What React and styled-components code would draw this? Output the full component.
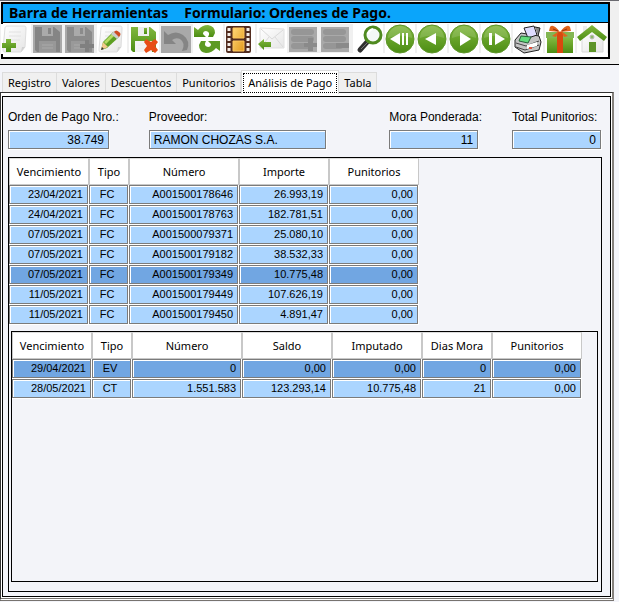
import React, { useState } from 'react'
import styled, { createGlobalStyle } from 'styled-components'

const GlobalStyle = createGlobalStyle`
  * {
    box-sizing: border-box;
  }
  body {
    margin: 0;
    background: #f3f4f9;
    color: #000;
    font-family: 'Noto Sans', 'Open Sans', sans-serif;
    font-size: 11px;
  }
`

const Page = styled.div`
  display: flex;
  flex-direction: column;
  min-height: 100vh;
  padding-bottom: 1px;
`

const Header = styled.header`
  background: #f0f0f0;
  border-top: 1px solid #6a6a70;
  border-bottom: 1px solid #000;
  padding: 1px 9px 5px 1px;
`

const Toolbar = styled.div`
  border: 2px solid #000;
  background: #fff;
`

const TitleBar = styled.h1`
  display: flex;
  gap: 16px;
  height: 19px;
  margin: 0;
  padding-left: 6px;
  background: #0aa5fb;
  border-bottom: 1px solid #000;
  font-size: 14px;
  font-weight: 700;
  line-height: 17px;
  white-space: nowrap;
`

const ToolRow = styled.div`
  display: flex;
  gap: 2px;
  margin-left: -2px;
  padding: 1px 0 3px;
  background: linear-gradient(#f0f0f0, #f0f0f0) no-repeat 0 1px / 100% 29px;
`

const ToolButton = styled.button`
  flex: none;
  width: 30px;
  height: 30px;
  padding: 0;
  border: 0;
  background: ${(props) => (props.disabled ? 'transparent' : '#fff')};

  svg {
    display: block;
  }
`

const Tabs = styled.div`
  display: flex;
  align-items: flex-end;
  height: 27px;
  padding-left: 2px;
`

const Tab = styled.button`
  position: relative;
  z-index: ${(props) => (props.$active ? 1 : 0)};
  height: ${(props) => (props.$active ? '24px' : '20px')};
  margin-bottom: ${(props) => (props.$active ? '-2px' : '0')};
  padding: ${(props) => (props.$active ? '1px' : '1px 5px 0')};
  border: 1px solid #dcdcdc;
  border-bottom: 0;
  border-left-width: ${(props) => (props.$active ? '1px' : '0')};
  background: ${(props) => (props.$active ? '#fff' : '#f0f0f0')};
  font: inherit;
  color: #000;
  line-height: 18px;
  white-space: nowrap;

  &:first-child {
    border-left-width: 1px;
  }

  span {
    display: block;
    padding: ${(props) => (props.$active ? '0 4px' : '0')};
    border: ${(props) => (props.$active ? '1px dotted #000' : '0')};
  }
`

const Panel = styled.main`
  flex: 1;
  display: flex;
  margin-right: 5px;
  padding: 3px 1px 1px;
  border: 1px solid #333;
  border-right: 2px solid #85817d;
  border-bottom: 3px double #77736f;
  background: #fff;
`

const Form = styled.div`
  flex: 1;
  display: flex;
  flex-direction: column;
  min-width: 0;
  padding: 12px 8px 4px 5px;
  border: 1px solid #000;
  background: #f3f4f9;
`

const Fields = styled.div`
  display: flex;
  gap: 30px;
  margin-bottom: 8px;
  padding-right: 1px;
`

const Field = styled.label`
  display: flex;
  flex-direction: column;
  gap: 4px;
  margin-left: ${(props) => (props.$push ? 'auto' : '0')};
  font: 12px/17px 'Liberation Sans', Arial, sans-serif;
  white-space: nowrap;
`

const Input = styled.input`
  width: ${(props) => props.$width}px;
  height: 19px;
  padding: 0 4px;
  border: 1px solid #7b7b7b;
  border-radius: 0;
  outline: none;
  background: #abd5ff;
  box-shadow: inset 1px 1px 0 #fff, 1px 1px 0 #fff;
  font: inherit;
  text-align: ${(props) => props.$align || 'right'};
`

const Frame = styled.section`
  flex: 1;
  display: flex;
  flex-direction: column;
  border: 1px solid #000;
`

const InnerFrame = styled(Frame)`
  margin: 6px 3px 9px 2px;
`

const Table = styled.table`
  table-layout: fixed;
  width: ${(props) => props.$width}px;
  border-collapse: separate;
  border-spacing: 0;
`

const HeadCell = styled.th`
  width: ${(props) => props.$width}px;
  height: 27px;
  padding: 0;
  border: 1px solid #c8c8c8;
  border-top-color: #dcdcdc;
  background: #fff;
  font-weight: 400;
  white-space: nowrap;
`

const Cell = styled.td`
  height: 20px;
  padding: 0 5px 0 2px;
  border: solid #fff;
  border-width: 0 1px 1px 0;
  background: ${(props) => (props.$selected ? '#71a6e2' : '#abd5ff')};
  box-shadow: inset 0 0 0 1px #7b7b7b, inset 2px 2px 0 #fff;
  font: 11px/17px 'Liberation Sans', Arial, sans-serif;
  text-align: ${(props) => props.$align || 'right'};
`

const Svg = ({ children }) => (
  <svg width="30" height="30" viewBox="0 0 30 30" aria-hidden="true">
    <defs>
      <linearGradient id="green" x1="0" y1="0" x2="0" y2="1">
        <stop offset="0" stopColor="#82b83f" />
        <stop offset="1" stopColor="#4c8d13" />
      </linearGradient>
      <linearGradient id="gold" x1="0" y1="0" x2="1" y2="1">
        <stop offset="0" stopColor="#ffd777" />
        <stop offset="1" stopColor="#e39a1d" />
      </linearGradient>
      <linearGradient id="paper" x1="0" y1="0" x2="1" y2="1">
        <stop offset="0" stopColor="#fff" />
        <stop offset="1" stopColor="#e6e6e6" />
      </linearGradient>
    </defs>
    {children}
  </svg>
)

const Sheet = () => (
  <>
    <path d="M6 2h17c2 0 2 1 2 3l-1 18-4 5H4c-2 0-2-1-2-3L4 4c0-1 1-2 2-2z" fill="url(#paper)" stroke="#dedede" />
    <path d="M8 8h12M8 12h12M7 16h12M7 20h8" stroke="#e2e2e2" />
    <path d="M20 28l1-5h3z" fill="#d2d2d2" />
  </>
)

const GrayBox = () => <path d="M0 1h29v28H0z" fill="#a9a9a9" />

const Disk = ({ body, slot, paper }) => (
  <>
    <path d="M2 3h19l6 5v20H4l-2-2z" fill={body} />
    <path d="M9 3h11v9H9z" fill={slot} />
    <path d="M15 4h3v6h-3z" fill={body} />
    <path d="M6 17h17v11H6z" fill={paper} />
    <path d="M9 21h11M9 24h11" stroke={slot} />
  </>
)

const Bars = ({ minus }) => (
  <>
    <path d="M0 3h28v25H0z" fill="#a9a9a9" />
    <g fill="#969696">
      <rect x="2" y="5" width="23" height="6" rx="3" />
      <rect x="2" y="12" width="23" height="6" rx="3" />
      <rect x="2" y="19" width="20" height="6" rx="3" />
    </g>
    <path d={minus ? 'M15 19h13v5H15z' : 'M19 14h5v5h4v4h-4v4h-5v-4h-4v-4h4z'} fill="#8a8a8a" />
  </>
)

const Ball = ({ children }) => (
  <>
    <circle cx="15" cy="15" r="14" fill="url(#green)" stroke="#5e9629" />
    <path d="M3 14a12 12 0 0 1 24 0q-12-5-24 0z" fill="#fff" opacity=".14" />
    <g fill="#fff">{children}</g>
  </>
)

const tools = [
  {
    label: 'Nuevo',
    icon: (
      <>
        <Sheet />
        <path d="M5 15h5v4h5v5h-5v4H5v-4H1v-5h4z" fill="url(#green)" />
      </>
    ),
  },
  {
    label: 'Guardar',
    disabled: true,
    icon: (
      <>
        <GrayBox />
        <Disk body="#858585" slot="#aaa" paper="#989898" />
      </>
    ),
  },
  {
    label: 'Guardar y agregar',
    disabled: true,
    icon: (
      <>
        <GrayBox />
        <Disk body="#8b8b8b" slot="#aaa" paper="#999" />
        <path d="M20 16h4v4h5v4h-5v4h-4v-4h-5v-4h5z" fill="#808080" />
      </>
    ),
  },
  {
    label: 'Modificar',
    icon: (
      <>
        <Sheet />
        <path d="M4 26l2-8 10-10 6 5-12 11z" fill="#5d9f22" />
        <path d="M7 18L17 8l2 2L9 20z" fill="#b6dc66" />
        <path d="M4 26l2-8 5 5z" fill="#f4c98d" />
        <path d="M4 26l1-3 2 2z" fill="#333" />
        <path d="M14 10l3-3 6 5-3 3z" fill="#ccc" />
        <path d="M17 8q2-3 5 0 3 2 0 5z" fill="#cd4c22" />
      </>
    ),
  },
  {
    label: 'Eliminar',
    icon: (
      <>
        <Disk body="url(#green)" slot="#eee" paper="#f3f3f3" />
        <path d="M17 15l5 3 4-3 3 3-3 4 3 4-3 3-4-3-5 3-2-3 3-4-3-4z" fill="#e84c15" />
      </>
    ),
  },
  {
    label: 'Deshacer',
    disabled: true,
    icon: (
      <>
        <path d="M0 2h30v27H0z" fill="#a9a9a9" />
        <path d="M3 7l4 4q8-5 15 0 8 6 4 15l-5 1q4-8-2-12-4-2-8 1l4 4H3z" fill="#858585" />
      </>
    ),
  },
  {
    label: 'Actualizar',
    icon: (
      <>
        <path d="M1 3l4 3Q9 1 15 1q7 1 7 8l-2 4h-5q3-5-2-6-3 0-3 3l3 3H1z" fill="url(#green)" />
        <path
          d="M1 3l4 3Q9 1 15 1q7 1 7 8l-2 4h-5q3-5-2-6-3 0-3 3l3 3H1z"
          fill="#5c9a22"
          transform="rotate(180 14 15)"
        />
      </>
    ),
  },
  {
    label: 'Vista previa',
    icon: (
      <>
        <rect x="1" y="2" width="25" height="27" rx="2" fill="#522d20" />
        <path d="M4 4v24M23 4v24" stroke="#f5eee8" strokeWidth="3" strokeDasharray="3 2" />
        <path d="M8 4h11v10H8zM8 17h11v10H8z" fill="url(#gold)" stroke="#ffc65a" />
      </>
    ),
  },
  {
    label: 'Enviar',
    icon: (
      <>
        <path d="M3 4l24 1v19H3z" fill="url(#paper)" stroke="#e0e0e0" />
        <path d="M4 5l11 10L26 6M4 23l8-10M26 23l-8-10" fill="none" stroke="#dadada" />
        <path d="M1 20l6-5v3h7v5H7v3z" fill="url(#green)" />
      </>
    ),
  },
  { label: 'Agregar fila', disabled: true, icon: <Bars /> },
  { label: 'Quitar fila', disabled: true, icon: <Bars minus /> },
  {
    label: 'Buscar',
    icon: (
      <>
        <path d="M15 17l-8 9" stroke="#303030" strokeWidth="5" strokeLinecap="round" />
        <path d="M15 18l-7 7" stroke="#777" />
        <circle cx="20" cy="11" r="8" fill="#f4f8f6" stroke="#4f8a20" strokeWidth="3" />
        <path d="M15 10q1-4 5-5" fill="none" stroke="#fff" strokeWidth="2" />
      </>
    ),
  },
  {
    label: 'Primero',
    icon: (
      <Ball>
        <path d="M5 15l10-6v12zM17 9h2v12h-2zM21 9h2v12h-2z" />
      </Ball>
    ),
  },
  {
    label: 'Anterior',
    icon: (
      <Ball>
        <path d="M8 15l11-6v12z" />
      </Ball>
    ),
  },
  {
    label: 'Siguiente',
    icon: (
      <Ball>
        <path d="M22 15L11 8v14z" />
      </Ball>
    ),
  },
  {
    label: 'Último',
    icon: (
      <Ball>
        <path d="M24 15l-10-6v12zM8 9h3v12H8z" />
      </Ball>
    ),
  },
  {
    label: 'Imprimir',
    icon: (
      <>
        <path d="M2 16L8 9l18 3 2 6-2 8-15 3-9-6z" fill="#c4c4c4" stroke="#222" />
        <path d="M11 4l10-2 3 9-9 3z" fill="#dedcff" stroke="#222" />
        <path d="M22 3l5 1-2 8" fill="#888" stroke="#222" />
        <path d="M8 12l10 1-3 6-9-2z" fill="#62dc7b" stroke="#276038" />
        <path d="M3 19l10 3 13-5M3 23l9 3 14-5" fill="none" stroke="#444" />
        <path d="M14 21l10-3v4l-10 3z" fill="#fff" />
        <path d="M16 24h3" stroke="#e2513d" strokeWidth="2" />
      </>
    ),
  },
  {
    label: 'Novedades',
    icon: (
      <>
        <path d="M1 8h28v6H1z" fill="#83b653" />
        <path d="M2 14h26v15H2z" fill="url(#green)" />
        <path d="M12 8h6v21h-6z" fill="#d9480f" />
        <path d="M15 8Q8-1 5 3l-1 4zM15 8q7-9 10-5l1 4zM14 7l-7 5 4 1zM16 7l7 5-4 1z" fill="#e0641d" />
        <path d="M8 5l5 2M22 5l-5 2" stroke="#9c310c" />
      </>
    ),
  },
  {
    label: 'Inicio',
    icon: (
      <>
        <path d="M5 13L15 5l11 9v14H5z" fill="url(#paper)" stroke="#d9d9d9" />
        <path d="M6 2h4v7H6z" fill="#ececec" />
        <path d="M0 13L15 1l15 12-3 4L15 8 3 17z" fill="url(#green)" />
        <circle cx="15" cy="13" r="2" fill="#8cb867" stroke="#bbb" />
        <path d="M12 18h7v10h-7z" fill="#5d9428" />
      </>
    ),
  },
]

const tabNames = ['Registro', 'Valores', 'Descuentos', 'Punitorios', 'Análisis de Pago', 'Tabla']

const debtColumns = [
  { title: 'Vencimiento', width: 80 },
  { title: 'Tipo', width: 40, align: 'center' },
  { title: 'Número', width: 110 },
  { title: 'Importe', width: 90 },
  { title: 'Punitorios', width: 90 },
]

const debtRows = [
  ['23/04/2021', 'FC', 'A001500178646', '26.993,19', '0,00'],
  ['24/04/2021', 'FC', 'A001500178763', '182.781,51', '0,00'],
  ['07/05/2021', 'FC', 'A001500079371', '25.080,10', '0,00'],
  ['07/05/2021', 'FC', 'A001500179182', '38.532,33', '0,00'],
  ['07/05/2021', 'FC', 'A001500179349', '10.775,48', '0,00'],
  ['11/05/2021', 'FC', 'A001500179449', '107.626,19', '0,00'],
  ['11/05/2021', 'FC', 'A001500179450', '4.891,47', '0,00'],
]

const paymentColumns = [
  { title: 'Vencimiento', width: 80 },
  { title: 'Tipo', width: 40, align: 'center' },
  { title: 'Número', width: 110 },
  { title: 'Saldo', width: 90 },
  { title: 'Imputado', width: 90 },
  { title: 'Dias Mora', width: 70 },
  { title: 'Punitorios', width: 90 },
]

const paymentRows = [
  ['29/04/2021', 'EV', '0', '0,00', '0,00', '0', '0,00'],
  ['28/05/2021', 'CT', '1.551.583', '123.293,14', '10.775,48', '21', '0,00'],
]

const Grid = ({ columns, rows, initial }) => {
  const [selected, setSelected] = useState(initial)
  const width = columns.reduce((sum, column) => sum + column.width, 0)

  return (
    <Table $width={width}>
      <thead>
        <tr>
          {columns.map((column) => (
            <HeadCell key={column.title} scope="col" $width={column.width}>
              {column.title}
            </HeadCell>
          ))}
        </tr>
      </thead>
      <tbody>
        {rows.map((row, index) => (
          <tr key={index} onClick={() => setSelected(index)}>
            {row.map((value, i) => (
              <Cell key={columns[i].title} $align={columns[i].align} $selected={index === selected}>
                {value}
              </Cell>
            ))}
          </tr>
        ))}
      </tbody>
    </Table>
  )
}

const App = () => {
  const [active, setActive] = useState('Análisis de Pago')

  return (
    <Page>
      <GlobalStyle />
      <Header>
        <Toolbar>
          <TitleBar>
            <span>Barra de Herramientas</span>
            <span>Formulario: Ordenes de Pago.</span>
          </TitleBar>
          <ToolRow>
            {tools.map((tool) => (
              <ToolButton key={tool.label} type="button" aria-label={tool.label} disabled={tool.disabled}>
                <Svg>{tool.icon}</Svg>
              </ToolButton>
            ))}
          </ToolRow>
        </Toolbar>
      </Header>

      <Tabs role="tablist">
        {tabNames.map((name) => (
          <Tab
            key={name}
            type="button"
            role="tab"
            aria-selected={name === active}
            $active={name === active}
            onClick={() => setActive(name)}
          >
            <span>{name}</span>
          </Tab>
        ))}
      </Tabs>

      <Panel>
        <Form>
          <Fields>
            <Field>
              Orden de Pago Nro.:
              <Input $width={101} defaultValue="38.749" />
            </Field>
            <Field>
              Proveedor:
              <Input $width={177} $align="left" defaultValue="RAMON CHOZAS S.A." />
            </Field>
            <Field $push>
              Mora Ponderada:
              <Input $width={89} defaultValue="11" />
            </Field>
            <Field>
              Total Punitorios:
              <Input $width={89} defaultValue="0" />
            </Field>
          </Fields>

          <Frame>
            <Grid columns={debtColumns} rows={debtRows} initial={4} />
            <InnerFrame>
              <Grid columns={paymentColumns} rows={paymentRows} initial={0} />
            </InnerFrame>
          </Frame>
        </Form>
      </Panel>
    </Page>
  )
}

export default App
